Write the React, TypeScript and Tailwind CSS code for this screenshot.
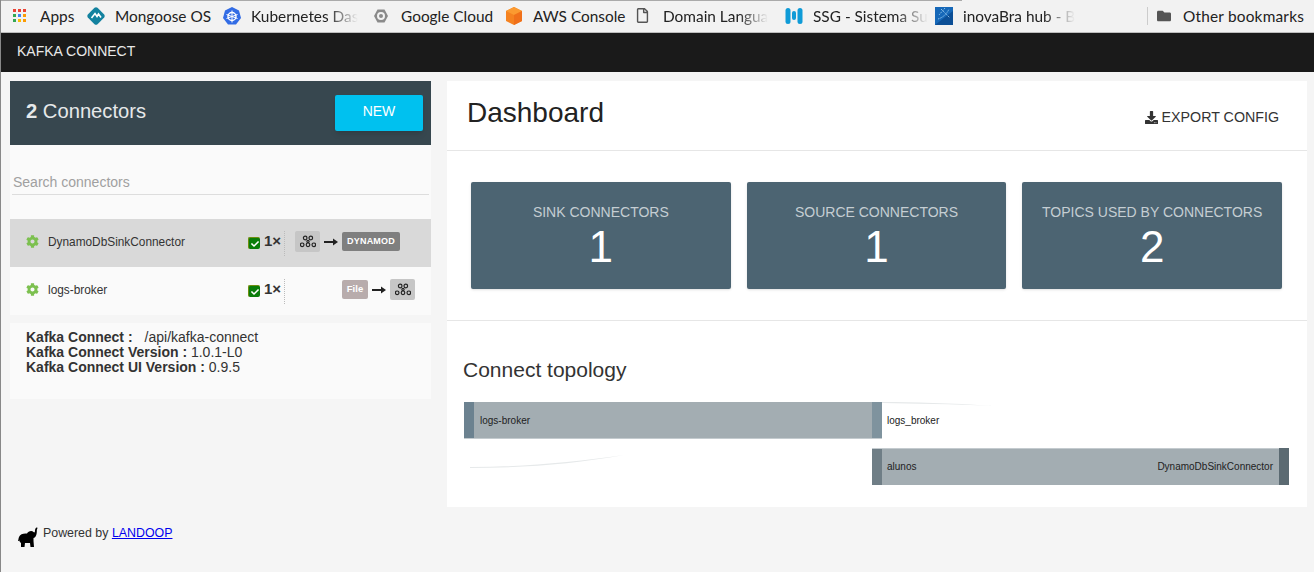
import React from 'react';
import { FaCog, FaDownload, FaCheck, FaFolder, FaRegFile } from 'react-icons/fa';

const bookmarks = [
  { label: 'Mongoose OS', icon: 'mongoose', width: 'w-[136px]' },
  { label: 'Kubernetes Das', icon: 'k8s', width: 'w-[150px]', fade: true },
  { label: 'Google Cloud', icon: 'gcloud', width: 'w-[132px]' },
  { label: 'AWS Console', icon: 'aws', width: 'w-[130px]' },
  { label: 'Domain Langua', icon: 'file', width: 'w-[150px]', fade: true },
  { label: 'SSG - Sistema Su', icon: 'ssg', width: 'w-[150px]', fade: true },
  { label: 'inovaBra hub - B', icon: 'inova', width: 'w-[212px]', fade: true },
];

const BookmarkIcon: React.FC<{ name: string }> = ({ name }) => {
  if (name === 'mongoose') {
    return (
      <svg width="18" height="18" viewBox="0 0 18 18">
        <path d="M7.5 0.8 Q9 -0.2 10.5 0.8 L17.2 7.5 Q18.2 9 17.2 10.5 L10.5 17.2 Q9 18.2 7.5 17.2 L0.8 10.5 Q-0.2 9 0.8 7.5 Z" fill="#13829f" />
        <path d="M4.5 11 L8 6.5 L10 9.5 L11.5 7 L14 10.5" fill="none" stroke="#fff" strokeWidth="1.6" />
      </svg>
    );
  }
  if (name === 'k8s') {
    return (
      <svg width="18" height="18" viewBox="0 0 18 18">
        <path d="M9 0 L16 3.5 L18 11 L13 17.5 L5 17.5 L0 11 L2 3.5 Z" fill="#326ce5" />
        <circle cx="9" cy="9.5" r="4" fill="none" stroke="#fff" strokeWidth="1.4" />
        <path d="M9 3.5 V15.5 M3.5 7.5 L14.5 11.5 M14.5 7.5 L3.5 11.5" stroke="#fff" strokeWidth="1" />
      </svg>
    );
  }
  if (name === 'gcloud') {
    return (
      <svg width="16" height="16" viewBox="0 0 16 16">
        <path d="M4.5 1.5 H11.5 L15 8 L11.5 14.5 H4.5 L1 8 Z" fill="#8a8a8a" />
        <circle cx="8" cy="8" r="3" fill="none" stroke="#f2f2f2" strokeWidth="2" />
      </svg>
    );
  }
  if (name === 'aws') {
    return (
      <svg width="18" height="18" viewBox="0 0 18 18">
        <path d="M9 0 L17 4 V14 L9 18 L1 14 V4 Z" fill="#f58220" />
        <path d="M9 0 L17 4 L9 8 L1 4 Z" fill="#fb9a30" />
        <path d="M9 8 L17 4 V14 L9 18 Z" fill="#f0701a" />
      </svg>
    );
  }
  if (name === 'file') return <FaRegFile className="text-[15px] text-[#555]" />;
  if (name === 'ssg') {
    return (
      <svg width="18" height="18" viewBox="0 0 18 18">
        <rect x="0.5" y="1" width="5" height="16" rx="2.5" fill="#0f9bd7" />
        <rect x="7" y="4" width="4" height="9" rx="2" fill="#0f9bd7" />
        <rect x="12.5" y="1" width="5" height="16" rx="2.5" fill="#0f9bd7" />
      </svg>
    );
  }
  return (
    <svg width="18" height="18" viewBox="0 0 18 18">
      <rect width="18" height="18" fill="#1668b8" />
      <path d="M0 18 L18 4 V18 Z" fill="#0c4f96" />
      <path d="M3 12 C7 11 12 7 14 2 M6 2 L15 11 M10 1 L4 8" stroke="#a9d6f5" strokeWidth="0.8" strokeDasharray="1.5 1" fill="none" />
    </svg>
  );
};

const AppsIcon: React.FC = () => {
  const colors = ['#ea4335', '#ea4335', '#ea4335', '#34a853', '#4285f4', '#fb9c05', '#34a853', '#fbbc05', '#fb9c05'];
  return (
    <div className="grid grid-cols-3 gap-[2px] w-[13px]">
      {colors.map((c, i) => (
        <span key={i} className="w-[3px] h-[3px]" style={{ backgroundColor: c }} />
      ))}
    </div>
  );
};

const KafkaIcon: React.FC = () => (
  <svg width="16" height="13" viewBox="0 0 16 13" fill="none" stroke="#222" strokeWidth="1.2">
    <circle cx="5.2" cy="3" r="1.8" />
    <circle cx="10.8" cy="3" r="1.8" />
    <circle cx="8" cy="6.4" r="1.1" />
    <circle cx="2.2" cy="9.8" r="1.8" />
    <circle cx="8" cy="9.8" r="1.8" />
    <circle cx="13.8" cy="9.8" r="1.8" />
  </svg>
);

const Arrow: React.FC = () => (
  <svg width="14" height="8" viewBox="0 0 14 8">
    <path d="M0 4 H10" stroke="#222" strokeWidth="2" />
    <path d="M9 0.5 L14 4 L9 7.5 Z" fill="#222" />
  </svg>
);

const Elephant: React.FC = () => (
  <svg width="20" height="21" viewBox="0 0 20 21" fill="#000">
    <path d="M1 10 C2 7 6 6 9 6.5 C10 4 14 3 15.5 5 C16.3 6 17 5.5 17 3.5 C17 1.5 18 0 19.2 0.5 C20 1 18.8 2 18.8 3.8 C19 7.5 17.8 10.5 15.5 11 L15.5 14 L16 20 L12.5 20 L12 16 L7 16 L6.5 20 L3 20 L3 16 C1.5 15 0.5 13 1 10 Z" />
    <path d="M1 10 L0 14 L0.8 14 L2 11 Z" />
  </svg>
);

const StatusCheck: React.FC = () => (
  <span className="w-[12px] h-[12px] shrink-0 rounded-[2px] bg-[#0a7d0a] border-l border-t border-[#6f8f10] flex items-center justify-center">
    <FaCheck className="text-[8px] text-white" />
  </span>
);

const Row: React.FC<{ name: string; selected?: boolean; children: React.ReactNode }> = ({ name, selected, children }) => (
  <div className={`h-[48px] flex items-center ${selected ? 'bg-[#d9d9d9]' : 'bg-[#fafafa]'}`}>
    <FaCog className="ml-[16px] text-[13px] text-[#7cc04f] shrink-0 -mt-[3px]" />
    <span className="ml-[9px] w-[200px] text-[11.85px] text-[#333]">{name}</span>
    <StatusCheck />
    <span className="ml-[4px] text-[15px] font-bold text-[#333] leading-none -mt-[5px] w-[20px] whitespace-nowrap">1×</span>
    <div className="w-[147px] h-[25px] border-l border-dotted border-[#bbb] flex items-center justify-end pb-[3px]">
      {children}
    </div>
  </div>
);

const StatCard: React.FC<{ title: string; value: string }> = ({ title, value }) => (
  <div className="h-[107px] rounded-[2px] bg-[#4c6472] text-center flex flex-col items-center pt-[21px] shadow-sm">
    <span className="text-[14px] leading-[18px] text-[#c5ced3]">{title}</span>
    <span className="text-[44px] leading-[50px] text-white font-light mt-[1px]">{value}</span>
  </div>
);

const Topology: React.FC = () => (
  <svg width="843" height="105" viewBox="0 0 843 105" className="block" fontFamily="'Liberation Sans', sans-serif" fontSize="10" fill="#222">
    <rect x="10" y="0" width="398" height="36" fill="#a3adb2" />
    <rect x="418" y="46" width="397" height="37" fill="#a3adb2" />
    <rect x="0" y="0" width="10" height="36" fill="#6c8290" />
    <rect x="408" y="0" width="10" height="36" fill="#7f939e" />
    <rect x="408" y="46" width="10" height="37" fill="#6f7e86" />
    <rect x="815" y="46" width="10" height="37" fill="#5b6a72" />
    <rect x="0" y="36" width="418" height="1" fill="#c4cbcf" />
    <rect x="408" y="46" width="407" height="1" fill="#c4cbcf" />
    <path d="M418 0 C450 0 485 1 530 4 C485 2 450 1.5 418 1 Z" fill="#e6e9ea" />
    <path d="M6 65 C60 65 110 60 160 53 C110 62 60 66 6 66 Z" fill="#e6e9ea" />
    <text x="16" y="22">logs-broker</text>
    <text x="423" y="22">logs_broker</text>
    <text x="423" y="68">alunos</text>
    <text x="809" y="68" textAnchor="end">DynamoDbSinkConnector</text>
  </svg>
);

const App: React.FC = () => {
  return (
    <div className="w-[1314px] h-[572px] overflow-hidden bg-[#f5f5f5] border-l border-[#888] font-['Liberation_Sans',sans-serif] flex flex-col">
      {/* browser bookmarks bar */}
      <div className="relative h-[33px] shrink-0 bg-[#f2f2f2] border-b border-[#bdbdbd] flex items-center font-['Lato',sans-serif] text-[15.4px] text-[#222]">
        <div className="absolute left-0 top-0 w-[961px] h-[1px] bg-[#aaa]" />
        <div className="w-[86px] pl-[12px] flex items-center">
          <AppsIcon />
          <span className="ml-[14px] mt-[2px]">Apps</span>
        </div>
        {bookmarks.map(b => (
          <div key={b.label} className={`${b.width} flex items-center shrink-0`}>
            <span className="w-[28px] shrink-0 flex">
              <BookmarkIcon name={b.icon} />
            </span>
            <span
              className={`whitespace-nowrap mt-[2px] ${
                b.fade ? '[mask-image:linear-gradient(to_right,black_72%,transparent_100%)]' : ''
              }`}
            >
              {b.label}
            </span>
          </div>
        ))}
        <div className="h-[18px] border-l border-[#ccc]" />
        <FaFolder className="ml-[9px] text-[14px] text-[#555]" />
        <span className="ml-[12px] mt-[2px] whitespace-nowrap tracking-[0.2px]">Other bookmarks</span>
      </div>

      {/* app nav */}
      <div className="h-[39px] shrink-0 bg-[#1a1a1a] flex items-center pl-[16px] pb-[2px] text-[14px] text-[#e8e8e8]">
        KAFKA CONNECT
      </div>

      <div className="flex-1 flex pt-[9px] pl-[9px]">
        {/* left column */}
        <div className="w-[421px] shrink-0">
          <div className="h-[64px] bg-[#37474f] flex items-center justify-between pl-[16px] pr-[8px]">
            <span className="text-[20.2px] text-[#e6e9ea] -mt-[4px]">
              <b>2</b> Connectors
            </span>
            <button className="w-[88px] h-[36px] rounded-[2px] bg-[#00c1ef] text-white text-[14px] pb-[3px] shadow-md">NEW</button>
          </div>
          <div className="h-[74px] bg-[#fafafa] px-[2px] pt-[27px]">
            <div className="h-[23px] border-b border-[#ddd] text-[14px] leading-[20px] text-[#a0a0a0] pl-[1px]">
              Search connectors
            </div>
          </div>
          <Row name="DynamoDbSinkConnector" selected>
            <span className="w-[25px] h-[21px] rounded-[2px] bg-[#c6c6c6] flex items-center justify-center">
              <KafkaIcon />
            </span>
            <span className="mx-[4px] flex">
              <Arrow />
            </span>
            <span className="mr-[31px] w-[58px] h-[19px] rounded-[2px] bg-[#7f7f7f] text-[9px] font-bold text-white tracking-[0.2px] flex items-center justify-center">
              DYNAMOD
            </span>
          </Row>
          <Row name="logs-broker">
            <span className="w-[26px] h-[19px] rounded-[2px] bg-[#b8acac] text-[9.5px] font-bold text-white flex items-center justify-center">
              File
            </span>
            <span className="mx-[4px] flex">
              <Arrow />
            </span>
            <span className="mr-[16px] w-[25px] h-[21px] rounded-[2px] bg-[#c6c6c6] flex items-center justify-center">
              <KafkaIcon />
            </span>
          </Row>
          <div className="mt-[8px] h-[76px] bg-[#fafafa] pl-[16px] pt-[7px] text-[14px] leading-[15px] text-[#333]">
            <div>
              <b>Kafka Connect :</b>
              <span className="ml-[12px]">/api/kafka-connect</span>
            </div>
            <div>
              <b>Kafka Connect Version :</b> 1.0.1-L0
            </div>
            <div>
              <b>Kafka Connect UI Version :</b> 0.9.5
            </div>
          </div>
          <div className="mt-[118px] pl-[8px] flex items-start text-[12.4px] text-[#333]">
            <span className="mt-[10px] flex">
              <Elephant />
            </span>
            <span className="ml-[5px] mt-[7px]">
              Powered by <a className="text-[#0000ee] underline">LANDOOP</a>
            </span>
          </div>
        </div>

        {/* main panel */}
        <div className="ml-[16px] w-[860px] h-[426px] bg-white">
          <div className="h-[70px] border-b border-[#e6e6e6] flex justify-between pl-[20px] pr-[28px]">
            <h1 className="text-[28px] leading-[34px] pt-[15px] text-[#222]">Dashboard</h1>
            <div className="flex items-center mt-[4px] text-[14.25px] text-[#333]">
              <FaDownload className="text-[13px] mr-[4px]" />
              EXPORT CONFIG
            </div>
          </div>
          <div className="h-[170px] border-b border-[#e6e6e6] grid grid-cols-3 gap-x-[16px] pl-[24px] pr-[25px] pt-[31px]">
            <StatCard title="SINK CONNECTORS" value="1" />
            <StatCard title="SOURCE CONNECTORS" value="1" />
            <StatCard title="TOPICS USED BY CONNECTORS" value="2" />
          </div>
          <h2 className="pl-[16px] pt-[36px] text-[21px] leading-[25px] text-[#333]">Connect topology</h2>
          <div className="pl-[17px] mt-[20px]">
            <Topology />
          </div>
        </div>
      </div>
    </div>
  );
};

export default App;
